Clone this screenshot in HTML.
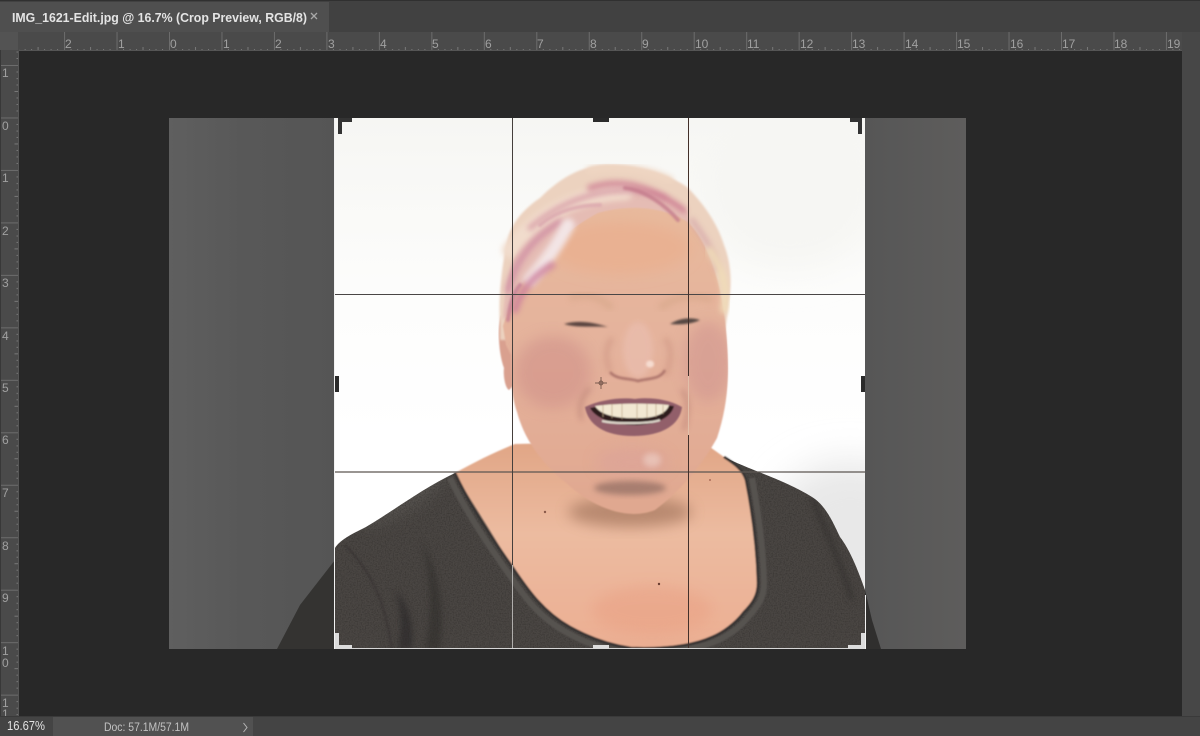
<!DOCTYPE html>
<html><head><meta charset="utf-8"><title>IMG_1621-Edit.jpg</title>
<style>
html,body{margin:0;padding:0;background:#282828;width:1200px;height:736px;overflow:hidden}
svg{display:block;position:absolute;left:0;top:0}
text{font-family:"Liberation Sans",sans-serif}
</style></head><body>
<svg width="1200" height="736" viewBox="0 0 1200 736" xmlns="http://www.w3.org/2000/svg">
<defs>
<linearGradient id="bgL" x1="0" x2="1" y1="0" y2="0"><stop offset="0" stop-color="#5f5f5f"/><stop offset=".45" stop-color="#585858"/><stop offset="1" stop-color="#555"/></linearGradient>
<linearGradient id="bgR" x1="0" x2="1" y1="0" y2="0"><stop offset="0" stop-color="#565656"/><stop offset="1" stop-color="#5e5d5c"/></linearGradient>
<linearGradient id="wall" x1="0" x2="0" y1="0" y2="1"><stop offset="0" stop-color="#f6f6f3"/><stop offset=".35" stop-color="#fdfdfc"/><stop offset=".6" stop-color="#ffffff"/><stop offset="1" stop-color="#ffffff"/></linearGradient>
<linearGradient id="skin" x1="0" x2="0" y1="0" y2="1"><stop offset="0" stop-color="#e8b99c"/><stop offset=".45" stop-color="#e4b29c"/><stop offset="1" stop-color="#e0a78f"/></linearGradient>
<linearGradient id="chest" x1="0" x2="0" y1="0" y2="1"><stop offset="0" stop-color="#e0a585"/><stop offset=".45" stop-color="#ecbba0"/><stop offset="1" stop-color="#ebae92"/></linearGradient>
<filter id="s" x="-5%" y="-5%" width="110%" height="110%"><feGaussianBlur stdDeviation=".7"/></filter>
<filter id="b1" x="-30%" y="-30%" width="160%" height="160%"><feGaussianBlur stdDeviation="1"/></filter>
<filter id="b2" x="-30%" y="-30%" width="160%" height="160%"><feGaussianBlur stdDeviation="3"/></filter>
<filter id="b3" x="-40%" y="-40%" width="180%" height="180%"><feGaussianBlur stdDeviation="7"/></filter>
<filter id="b4" x="-60%" y="-60%" width="220%" height="220%"><feGaussianBlur stdDeviation="18"/></filter>
<filter id="noise" x="0" y="0" width="100%" height="100%" color-interpolation-filters="sRGB"><feTurbulence type="fractalNoise" baseFrequency=".75" numOctaves="2" seed="4"/><feColorMatrix values="0 0 0 0 .17  0 0 0 0 .16  0 0 0 0 .15  0 0 0 1.600 -.65"/></filter>
<pattern id="tickH" x="169" y="32" width="52.47" height="19" patternUnits="userSpaceOnUse">
<path d="M.5 0V19" stroke="#6c6c6c" fill="none"/>
<path d="M7 17V19M13.600 17V19M20 17V19M26.500 15V19M33 17V19M39.500 17V19M46 17V19" stroke="#787878" fill="none"/>
</pattern>
<pattern id="tickV" x="0" y="65" width="19" height="52.47" patternUnits="userSpaceOnUse">
<path d="M0 .5H19" stroke="#6c6c6c" fill="none"/>
<path d="M16.500 7H19M16.500 13.600H19M16.500 20H19M14.500 26.500H19M16.500 33H19M16.500 39.500H19M16.500 46H19" stroke="#787878" fill="none"/>
</pattern>
<clipPath id="crop"><rect x="335" y="118" width="530" height="531"/></clipPath>
<clipPath id="photo"><rect x="169" y="118" width="797" height="531"/></clipPath>
<clipPath id="shirtC"><path d="M455 473C420 490 395 510 366 527C350 535 340 540 335 548V649H865V590C858 570 850 550 840 537C832 520 825 505 812 497C785 480 750 470 724 457L700 470L500 470Z"/></clipPath>
<clipPath id="faceClip"><path d="M503 326C508 310 518 285 540 260C552 245 575 225 598 213C625 205 660 205 688 222C710 245 722 285 726 330C730 375 728 405 717 438C704 462 682 490 655 510C625 522 590 505 565 482C540 462 524 438 517 412C511 395 511 375 511 355L506 345Z"/></clipPath>
</defs>

<!-- chrome -->
<rect width="1200" height="736" fill="#282828"/>
<rect width="1200" height="32" fill="#414141"/>
<rect width="1200" height="1" fill="#303030"/>
<rect x="0" y="2" width="329" height="30" fill="#4f4f4f"/>
<text x="12" y="22" font-size="12.500" font-weight="700" fill="#e4e4e4" textLength="295" lengthAdjust="spacingAndGlyphs">IMG_1621-Edit.jpg @ 16.7% (Crop Preview, RGB/8)</text>
<path d="M311 13L317 19M317 13L311 19" stroke="#a8a8a8" stroke-width="1.300" fill="none"/>

<!-- rulers -->
<rect x="0" y="32" width="1182" height="19" fill="#4a4a4a"/>
<rect x="0" y="32" width="19" height="684" fill="#4a4a4a"/>
<rect x="19" y="32" width="1163" height="19" fill="url(#tickH)"/>
<rect x="0" y="51" width="19" height="665" fill="url(#tickV)"/>
<rect x="0" y="32" width="18" height="18" fill="#535353"/>
<rect x="18" y="51" width="1" height="665" fill="#555"/>
<rect x="19" y="50" width="1163" height="1" fill="#555"/>
<rect x="0" y="50" width="1" height="666" fill="#383838"/>
<g font-size="12" fill="#a0a0a0">
<text x="65" y="48">2</text><text x="118" y="48">1</text><text x="170" y="48">0</text><text x="223" y="48">1</text><text x="275" y="48">2</text><text x="328" y="48">3</text><text x="380" y="48">4</text><text x="432" y="48">5</text><text x="485" y="48">6</text><text x="537" y="48">7</text><text x="590" y="48">8</text><text x="642" y="48">9</text>
<text x="695" y="48">10</text><text x="747" y="48">11</text><text x="800" y="48">12</text><text x="852" y="48">13</text><text x="905" y="48">14</text><text x="957" y="48">15</text><text x="1010" y="48">16</text><text x="1062" y="48">17</text><text x="1114" y="48">18</text><text x="1167" y="48">19</text>
<text x="2" y="77">1</text><text x="2" y="130">0</text><text x="2" y="182">1</text><text x="2" y="235">2</text><text x="2" y="287">3</text><text x="2" y="340">4</text><text x="2" y="392">5</text><text x="2" y="444">6</text><text x="2" y="497">7</text><text x="2" y="550">8</text><text x="2" y="602">9</text>
<text x="2" y="655">1</text><text x="2" y="667">0</text><text x="2" y="707">1</text><text x="2" y="718">1</text>
</g>
<rect x="1182" y="32" width="18" height="684" fill="#474747"/>

<!-- photo : outside crop -->
<g clip-path="url(#photo)">
<rect x="169" y="118" width="166" height="531" fill="url(#bgL)"/>
<rect x="865" y="118" width="101" height="531" fill="url(#bgR)"/>
<path d="M335 560L300 605L277 649H335Z" fill="#343331"/>
<path d="M865 590L872 620L881 649H865Z" fill="#302f2e"/>
</g>

<!-- photo : inside crop -->
<g clip-path="url(#crop)">
<rect x="335" y="118" width="530" height="531" fill="url(#wall)"/>
<ellipse cx="790" cy="190" rx="90" ry="80" fill="#f6f6f3" filter="url(#b4)"/>
<ellipse cx="850" cy="530" rx="80" ry="70" fill="#e8e8e8" filter="url(#b4)"/>

<!-- shirt -->
<g clip-path="url(#shirtC)">
<rect x="335" y="440" width="530" height="210" fill="#4a4643"/>
<ellipse cx="400" cy="495" rx="50" ry="18" fill="#565250" filter="url(#b3)" transform="rotate(-30 400 495)"/>
<path d="M420 540C432 570 432 620 425 649H440C445 610 440 570 420 540Z" fill="#3a3735" filter="url(#b2)"/>
<path d="M395 590C402 610 402 630 398 649H412C414 625 410 605 395 590Z" fill="#363331" filter="url(#b2)"/>
<path d="M812 497C825 530 840 560 852 600" stroke="#3a3735" stroke-width="5" fill="none" filter="url(#b2)"/>
<path d="M345 545C370 570 385 600 392 649" stroke="#3c3937" stroke-width="2" fill="none" filter="url(#b1)"/>
<rect x="335" y="440" width="530" height="210" filter="url(#noise)" opacity=".7"/>
</g>

<!-- chest and neck -->
<g filter="url(#s)">
<path d="M455 473C475 462 495 452 515 444L700 440L724 457C735 464 743 470 746 480C752 510 757 545 758 583C758 596 752 604 744 612C735 624 722 633 712 637C690 647 660 649 631 648C610 645 590 638 570 627C540 610 525 585 511 565C490 530 470 500 455 473Z" fill="url(#chest)"/>
<path d="M450 478C465 510 485 540 506 570C520 590 535 615 566 632C590 646 612 651 631 652C660 653 692 651 714 642C726 637 740 628 749 616C758 606 764 598 764 583C763 545 758 510 752 478" fill="none" stroke="#565250" stroke-width="6"/>
<path d="M455 473C470 505 490 535 511 565C525 585 540 610 570 627C590 638 610 645 631 648C660 649 690 647 712 637C722 633 735 624 744 612C752 604 758 596 758 583C757 545 752 510 746 480C743 470 735 464 724 457" fill="none" stroke="#343130" stroke-width="2.500"/>
</g>
<ellipse cx="652" cy="610" rx="60" ry="24" fill="#e8977a" opacity=".35" filter="url(#b3)"/>
<ellipse cx="630" cy="512" rx="62" ry="15" fill="#a87a62" opacity=".75" filter="url(#b3)"/>
<circle cx="545" cy="512" r="1.200" fill="#8a5a4a"/><circle cx="659" cy="584" r="1.200" fill="#6a3d30"/><circle cx="710" cy="480" r=".9" fill="#9a5a4a"/>

<!-- ear -->
<path d="M501 315C497 330 499 355 504 368C503 375 505 388 509 390L514 385L516 320Z" fill="#d9a08f" filter="url(#s)"/>
<!-- hair back -->
<path d="M500 322C498 300 502 262 508 238C512 222 525 208 540 198C560 178 580 167 603 165C635 164 665 172 687 187C705 205 718 225 724 245C731 262 732 285 729 300C727 315 727 330 720 340L500 340Z" fill="#ecd2bf" filter="url(#b1)"/>
<path d="M503 320C504 290 510 262 522 240C540 218 570 198 600 190C630 182 665 190 688 212L690 228L560 240L520 300Z" fill="#e5bcb4" filter="url(#b1)"/>
<!-- face -->
<path d="M503 326C508 310 518 285 540 260C552 245 575 225 598 213C625 205 660 205 688 222C710 245 722 285 726 330C730 375 728 405 717 438C704 462 682 490 655 510C625 522 590 505 565 482C540 462 524 438 517 412C511 395 511 375 511 355L506 345Z" fill="url(#skin)" filter="url(#s)"/>
<g clip-path="url(#faceClip)">
<ellipse cx="620" cy="248" rx="70" ry="26" fill="#e9b192" filter="url(#b3)"/>
<ellipse cx="553" cy="372" rx="38" ry="36" fill="#cf8f88" opacity=".55" filter="url(#b3)"/>
<ellipse cx="708" cy="362" rx="24" ry="40" fill="#d19690" opacity=".6" filter="url(#b3)"/>
<ellipse cx="632" cy="462" rx="36" ry="14" fill="#dca399" opacity=".7" filter="url(#b3)"/>
<ellipse cx="652" cy="460" rx="9" ry="7" fill="#ecccc2" opacity=".7" filter="url(#b2)"/>
<ellipse cx="630" cy="488" rx="36" ry="7" fill="#8f6c62" opacity=".7" filter="url(#b2)"/>
<path d="M570 298C590 292 600 298 612 308M660 308C675 296 695 294 712 300" stroke="#d8a98c" stroke-width="7" fill="none" filter="url(#b2)" opacity=".7"/>
<path d="M612 338C604 350 606 360 610 372M665 338C675 350 668 370 665 376" stroke="#cd9482" stroke-width="5" fill="none" filter="url(#b2)" opacity=".6"/>
<path d="M590 388C580 398 578 410 582 420M682 390C690 400 688 415 684 430" stroke="#b47c72" stroke-width="3" fill="none" filter="url(#b2)" opacity=".7"/>
</g>
<!-- nose -->
<ellipse cx="638" cy="350" rx="15" ry="28" fill="#e9bcab" filter="url(#b2)" opacity=".9"/>
<path d="M610 372C616 380 630 378 638 381C648 378 660 380 665 370" stroke="#a87068" stroke-width="2.500" fill="none" filter="url(#b1)"/>
<ellipse cx="650" cy="364" rx="4" ry="3.500" fill="#f6dcd0" filter="url(#b1)"/>
<!-- eyes -->
<path d="M564 324C578 320 592 322 608 327C594 326 576 328 564 324Z" fill="#5a453f" filter="url(#b1)"/>
<path d="M670 324C680 318 690 317 700 320C692 324 680 325 670 324Z" fill="#554643" filter="url(#b1)"/>
<!-- mouth -->
<g filter="url(#s)">
<path d="M585 407C600 400 620 397 635 399C650 397 668 399 682 407C680 425 662 436 633 436C605 436 588 425 585 407Z" fill="#925f6a"/>
<path d="M590 408C610 403 655 403 674 406C672 415 662 423 640 425C615 426 596 419 590 408Z" fill="#2f1f1d"/>
<path d="M595 406C615 403 650 403 669 405C667 413 656 418 640 418C620 419 601 416 595 406Z" fill="#f2e8d2"/>
<path d="M603 405V417M612 404V418M622 404V419M637 404V419M647 404V418M656 404V417M663 405V414" stroke="#bda585" stroke-width=".7" fill="none"/>
<path d="M602 421C615 424 650 424 660 420" stroke="#ddd6ca" stroke-width="2.200" fill="none"/>
</g>
<circle cx="601" cy="383" r="2" fill="none" stroke="#5a4038" stroke-width=".7"/>
<path d="M595 383H607M601 377V389" stroke="#5a4038" stroke-width=".7" fill="none"/>

<!-- hair strands -->
<g fill="none" stroke-linecap="round">
<path d="M510 250C535 218 570 195 625 192" stroke="#f1dccc" stroke-width="16" filter="url(#b2)"/>
<path d="M530 228C565 198 615 180 665 198" stroke="#d494a2" stroke-width="5" filter="url(#b2)" opacity=".85"/>
<path d="M590 188C620 178 650 185 684 210" stroke="#cd7e92" stroke-width="6" filter="url(#b2)" opacity=".85"/>
<path d="M625 188C645 190 665 205 678 220" stroke="#c47c8c" stroke-width="4" filter="url(#b1)" opacity=".8"/>
<path d="M540 225C560 208 585 205 600 205" stroke="#dba7ae" stroke-width="4" filter="url(#b1)" opacity=".8"/>
<path d="M508 290C515 262 532 238 560 222" stroke="#cf8ca3" stroke-width="6" filter="url(#b2)" opacity=".85"/>
<path d="M530 280C545 262 558 245 568 225" stroke="#f3e5e6" stroke-width="13" filter="url(#b2)"/>
<path d="M515 310C520 290 535 275 552 265" stroke="#cc7f9b" stroke-width="7" filter="url(#b2)" opacity=".85"/>
<path d="M508 320C510 305 512 295 520 285" stroke="#c68094" stroke-width="4" filter="url(#b1)" opacity=".8"/>
<path d="M692 220C706 240 715 252 717 270" stroke="#cc94a0" stroke-width="5" filter="url(#b2)" opacity=".6"/>
<path d="M710 250C722 270 728 285 724 310" stroke="#f0dcb8" stroke-width="7" filter="url(#b2)"/>
<path d="M590 170C620 165 650 170 670 180" stroke="#efd6c2" stroke-width="7" filter="url(#b2)"/>
</g>
</g>

<!-- grid -->
<g fill="none">
<path d="M335 294.500H865" stroke="#4a4646"/>
<path d="M335 472H865" stroke="#5c5652" stroke-width="1.200"/>
<path d="M512.500 118V565" stroke="#453f3c"/>
<path d="M512.500 565V649" stroke="#b0aeac"/>
<path d="M688.500 118V649" stroke="#43302a"/>
<path d="M688.500 376V435" stroke="#e2bfa9"/>
<path d="M334.500 118V649" stroke="#f2f2f2"/>
<path d="M865.500 595V649" stroke="#f2f2f2"/>
<path d="M335 648.500H865" stroke="#d6d6d6"/>
</g>

<!-- handles -->
<g fill="#2b2b2b">
<path d="M338 118H352V122H342V134H338Z" fill="#333"/>
<path d="M850 118H862V134H858V122H850Z" fill="#333"/>
<rect x="593" y="118" width="16" height="4"/>
<rect x="335" y="376" width="4" height="16"/>
<rect x="861" y="376" width="4" height="16"/>
</g>
<g fill="#dcdcdc">
<path d="M335 633H339V645H352V649H335Z"/>
<path d="M848 645H861V633H865V649H848Z"/>
<rect x="593" y="645" width="16" height="4"/>
</g>

<!-- status bar -->
<rect x="0" y="716" width="1200" height="20" fill="#444"/>
<rect x="0" y="716" width="1200" height="1" fill="#3a3a3a"/>
<rect x="53" y="717" width="200" height="19" fill="#515151"/>
<text x="7" y="730" font-size="12.500" fill="#e2e2e2" textLength="38" lengthAdjust="spacingAndGlyphs">16.67%</text>
<text x="104" y="731" font-size="11.500" fill="#c2c2c2" textLength="85" lengthAdjust="spacingAndGlyphs">Doc: 57.1M/57.1M</text>
<path d="M243.500 723L247 727.500L243.500 732" stroke="#b5b5b5" fill="none"/>
</svg>
</body></html>
